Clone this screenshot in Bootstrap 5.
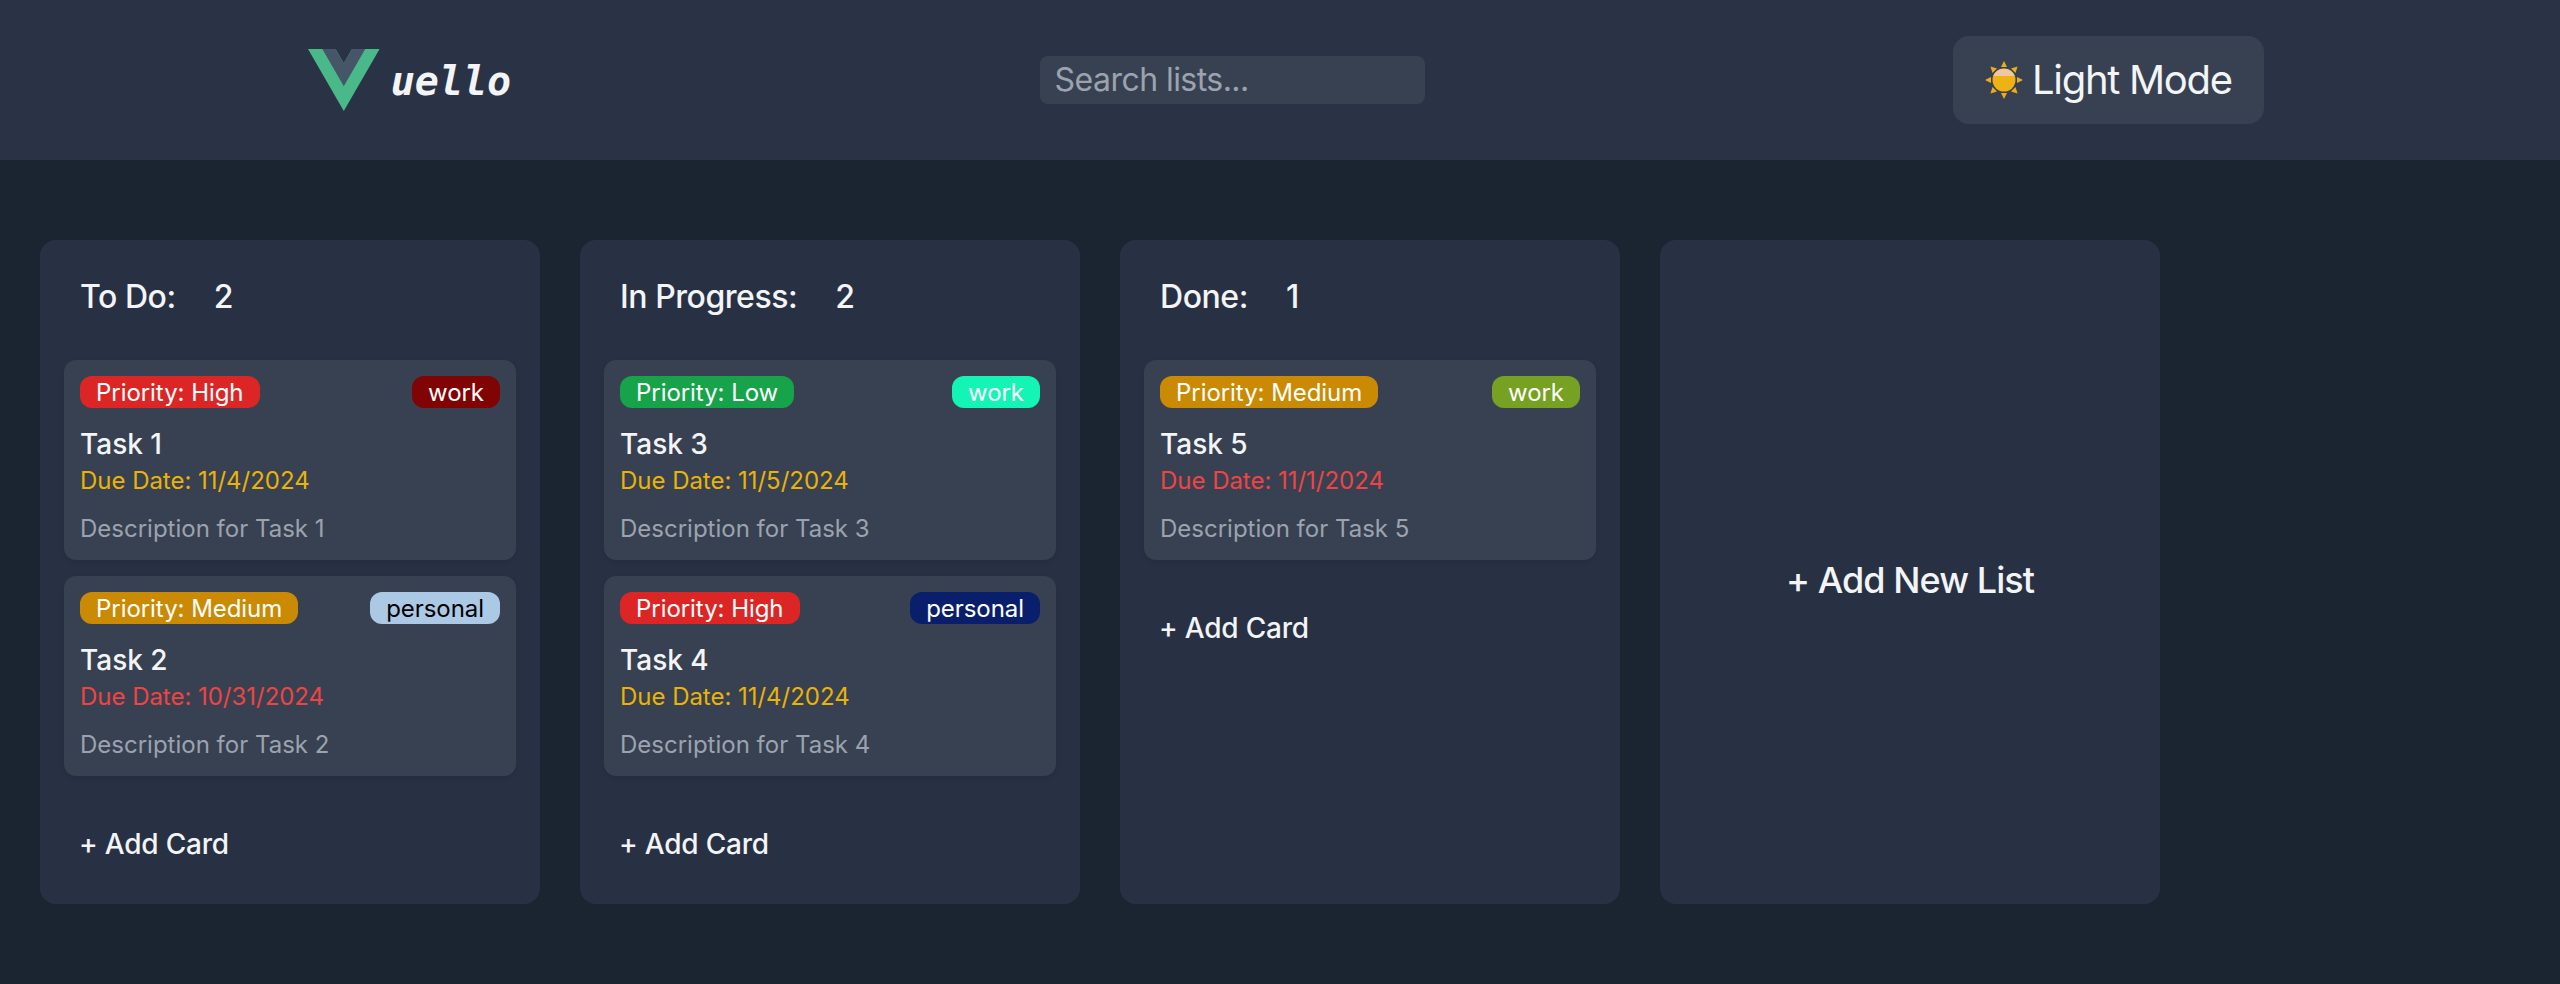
<!DOCTYPE html>
<html lang="en">
<head>
<meta charset="utf-8">
<title>Vuello</title>
<link rel="stylesheet" href="https://cdn.jsdelivr.net/npm/bootstrap@5.3.0/dist/css/bootstrap.min.css">
<style>
body{background:#1b2532;font-family:Inter,"Liberation Sans",sans-serif;color:#f3f4f6;min-height:984px}
.topbar{height:160px;background:#2a3345;padding:0 32px}
.logo-box{width:215px;padding-left:12px}
.logo-text{font-family:"DejaVu Sans Mono",monospace;font-weight:700;font-style:italic;font-size:40px;line-height:1;color:#f3f4f6;margin-left:11px;margin-top:12px}
.search-box.form-control{width:385px;height:48px;background:#374151;border:0;border-radius:8px;padding:0 15px;font-size:32px;line-height:48px;letter-spacing:-.55px;color:#f3f4f6;box-shadow:none}
.search-box.form-control::placeholder{color:#9ca3af;opacity:1}
.mode-btn.btn{height:88px;background:#374151;border:0;border-radius:16px;padding:0 32px;font-size:40px;line-height:48px;letter-spacing:-1.3px;color:#f3f4f6;font-weight:400}
.mode-btn svg{margin-right:9px}
.board{padding:80px 40px 0;gap:40px}
.lane{width:500px;height:664px;background:#283143;border-radius:16px;padding:24px}
.lane-head{padding:16px;margin-bottom:30px;font-size:32px;line-height:34px;font-weight:500;letter-spacing:-.45px;color:#f3f4f6}
.lane-count{margin-left:38px}
.task.card{background:#374151;border:0;border-radius:12px;padding:16px 16px 15px;box-shadow:0 2px 4px rgba(0,0,0,.1);color:#f3f4f6;margin-bottom:16px}
.pill.badge{font-size:24px;line-height:34px;height:32px;font-weight:400;letter-spacing:-.05px;border-radius:12px;padding:0 16px;color:#fff}
.pill-high{background:#dc2626}
.pill-medium{background:#ca8a04}
.pill-low{background:#16a34a}
.tag-maroon{background:#800404}
.tag-sky{background:#abc9e4}
.pill.tag-sky{color:#000}
.tag-mint{background:#14f4b4}
.tag-navy{background:#0a1f6b}
.tag-olive{background:#76a122}
.task-title{font-size:28px;line-height:40px;font-weight:500;margin:16px 0 0}
.due{font-size:24px;line-height:32px;margin:1px 0 0;letter-spacing:-.03px}
.due-soon{color:#eab308}
.due-late{color:#ef4444}
.descr{font-size:24px;line-height:32px;margin:16px 0 0;color:#9ca3af}
.add-card.btn{display:block;width:100%;text-align:left;padding:16px 16px 16px 15px;margin-top:32px;font-size:28px;line-height:40px;font-weight:500;letter-spacing:-.2px;color:#f3f4f6;border:0;background:transparent}
.add-list.btn{font-size:36px;line-height:44px;font-weight:500;letter-spacing:-.93px;color:#f3f4f6;border:0;background:#283143;width:500px;height:664px;border-radius:16px;padding:16px 0 0}
</style>
</head>
<body>
<header class="topbar d-flex align-items-center justify-content-around">
  <div class="logo-box d-flex align-items-start">
    <svg width="72" height="62" viewBox="0 0 261.76 226.69" aria-label="Vue logo">
      <path fill="#4ab98a" d="M161.096.001l-30.225 52.351L100.647.001H-.005l130.877 226.688L261.749.001z"/>
      <path fill="#475569" d="M161.096.001l-30.225 52.351L100.647.001H52.346l78.526 136.01L209.398.001z"/>
    </svg>
    <span class="logo-text">uello</span>
  </div>
  <input class="search-box form-control" type="text" placeholder="Search lists...">
  <button class="mode-btn btn d-flex align-items-center" type="button">
    <svg width="38" height="38" viewBox="0 0 38 38" aria-hidden="true">
      <g fill="#eeac1d">
        <path d="M19 0l3 6h-6z"/><path d="M19 38l3-6h-6z"/><path d="M0 19l6-3v6z"/><path d="M38 19l-6-3v6z"/>
        <path d="M5.5 5.5l6.500 2-4.500 4.500z"/><path d="M32.500 5.500l-6.500 2 4.500 4.500z"/><path d="M5.500 32.500l6.500-2-4.500-4.500z"/><path d="M32.500 32.500l-6.500-2 4.500-4.500z"/>
      </g>
      <circle cx="19" cy="19" r="11.500" fill="#efb215"/>
      <path d="M9 13.500a11.500 11.500 0 0 1 20 0l.6 1.500H8.400z" fill="#efc7a0"/>
    </svg>
    <span>Light Mode</span>
  </button>
</header>
<main class="board d-flex align-items-start">
  <section class="lane">
    <div class="lane-head">To Do:<span class="lane-count">2</span></div>
    <div class="task card">
      <div class="d-flex justify-content-between"><span class="pill badge pill-high">Priority: High</span><span class="pill badge tag-maroon">work</span></div>
      <h3 class="task-title">Task 1</h3><p class="due due-soon">Due Date: 11/4/2024</p><p class="descr">Description for Task 1</p>
    </div>
    <div class="task card">
      <div class="d-flex justify-content-between"><span class="pill badge pill-medium">Priority: Medium</span><span class="pill badge tag-sky">personal</span></div>
      <h3 class="task-title">Task 2</h3><p class="due due-late">Due Date: 10/31/2024</p><p class="descr">Description for Task 2</p>
    </div>
    <button class="add-card btn" type="button">+ Add Card</button>
  </section>
  <section class="lane">
    <div class="lane-head">In Progress:<span class="lane-count">2</span></div>
    <div class="task card">
      <div class="d-flex justify-content-between"><span class="pill badge pill-low">Priority: Low</span><span class="pill badge tag-mint">work</span></div>
      <h3 class="task-title">Task 3</h3><p class="due due-soon">Due Date: 11/5/2024</p><p class="descr">Description for Task 3</p>
    </div>
    <div class="task card">
      <div class="d-flex justify-content-between"><span class="pill badge pill-high">Priority: High</span><span class="pill badge tag-navy">personal</span></div>
      <h3 class="task-title">Task 4</h3><p class="due due-soon">Due Date: 11/4/2024</p><p class="descr">Description for Task 4</p>
    </div>
    <button class="add-card btn" type="button">+ Add Card</button>
  </section>
  <section class="lane">
    <div class="lane-head">Done:<span class="lane-count">1</span></div>
    <div class="task card">
      <div class="d-flex justify-content-between"><span class="pill badge pill-medium">Priority: Medium</span><span class="pill badge tag-olive">work</span></div>
      <h3 class="task-title">Task 5</h3><p class="due due-late">Due Date: 11/1/2024</p><p class="descr">Description for Task 5</p>
    </div>
    <button class="add-card btn" type="button">+ Add Card</button>
  </section>
  <button class="add-list btn" type="button">+ Add New List</button>
</main>
</body>
</html>
